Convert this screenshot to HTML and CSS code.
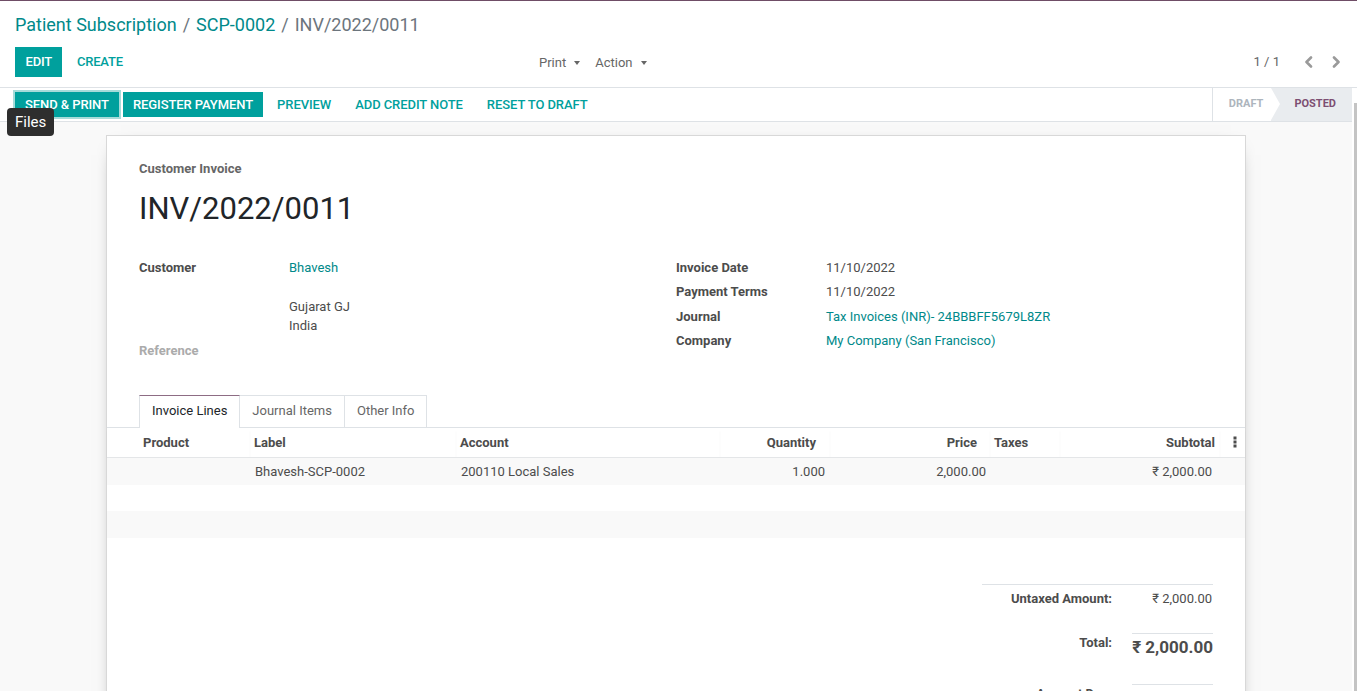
FILE: index.html
```html
<!DOCTYPE html>
<html lang="en">
<head>
<meta charset="utf-8">
<title>INV/2022/0011</title>
<link rel="stylesheet" href="styles.css">
</head>
<body>
<div class="control-panel">
  <ol class="breadcrumb">
    <li><a href="#">Patient Subscription</a></li>
    <li class="sep">/</li>
    <li><a href="#">SCP-0002</a></li>
    <li class="sep">/</li>
    <li class="active">INV/2022/0011</li>
  </ol>
  <div class="cp-bottom">
    <div class="cp-left">
      <button class="btn btn-primary cp-btn">Edit</button>
      <button class="btn btn-link cp-btn">Create</button>
      <div class="action-menus">
        <span class="dd">Print <i class="caret"></i></span>
        <span class="dd">Action <i class="caret"></i></span>
      </div>
    </div>
    <div class="cp-right">
      <span class="pager-value">1 / 1</span>
      <button class="pager-btn" aria-label="Previous">
        <svg width="9" height="12" viewBox="0 0 9 12"><polyline points="7,1.5 2.5,6 7,10.5" fill="none" stroke="#9a9a9a" stroke-width="2.6" stroke-linecap="round" stroke-linejoin="round"/></svg>
      </button>
      <button class="pager-btn" aria-label="Next">
        <svg width="9" height="12" viewBox="0 0 9 12"><polyline points="2,1.5 6.5,6 2,10.5" fill="none" stroke="#9a9a9a" stroke-width="2.6" stroke-linecap="round" stroke-linejoin="round"/></svg>
      </button>
    </div>
  </div>
</div>

<div class="form-area">
  <div class="form-main">
    <div class="statusbar">
      <div class="sb-buttons">
        <button class="btn btn-primary sb-btn focused">Send &amp; Print</button>
        <button class="btn btn-primary sb-btn">Register Payment</button>
        <button class="btn btn-link sb-btn">Preview</button>
        <button class="btn btn-link sb-btn">Add Credit Note</button>
        <button class="btn btn-link sb-btn">Reset to Draft</button>
      </div>
      <div class="sb-status">
        <span class="st st-draft">Draft</span>
        <span class="st st-posted">Posted</span>
      </div>
    </div>

    <div class="sheet-bg">
      <div class="sheet">
        <div class="oe-title">
          <span class="subtitle">Customer Invoice</span>
          <h1>INV/2022/0011</h1>
        </div>

        <div class="groups">
          <div class="group">
            <div class="lbl">Customer</div>
            <div class="val"><a href="#">Bhavesh</a><br><br>Gujarat GJ<br>India</div>
            <div class="lbl empty">Reference</div>
            <div class="val"></div>
          </div>
          <div class="group">
            <div class="lbl">Invoice Date</div>
            <div class="val">11/10/2022</div>
            <div class="lbl">Payment Terms</div>
            <div class="val">11/10/2022</div>
            <div class="lbl">Journal</div>
            <div class="val"><a href="#">Tax Invoices (INR)- 24BBBFF5679L8ZR</a></div>
            <div class="lbl">Company</div>
            <div class="val"><a href="#">My Company (San Francisco)</a></div>
          </div>
        </div>

        <div class="notebook">
          <div class="tabs">
            <span class="tab active">Invoice Lines</span>
            <span class="tab">Journal Items</span>
            <span class="tab">Other Info</span>
          </div>
          <table class="list">
            <colgroup>
              <col class="c-product"><col class="c-label"><col class="c-account"><col class="c-qty"><col class="c-price"><col class="c-taxes"><col class="c-sub"><col class="c-opt">
            </colgroup>
            <thead>
              <tr>
                <th class="first">Product</th>
                <th>Label</th>
                <th>Account</th>
                <th class="num qty">Quantity</th>
                <th class="num price">Price</th>
                <th>Taxes</th>
                <th class="num sub">Subtotal</th>
                <th class="opt">
                  <svg width="4" height="12" viewBox="0 0 4 12"><rect x="0.5" y="0.5" width="3" height="3" fill="#4c4c4c"/><rect x="0.5" y="4.5" width="3" height="3" fill="#4c4c4c"/><rect x="0.5" y="8.5" width="3" height="3" fill="#4c4c4c"/></svg>
                </th>
              </tr>
            </thead>
            <tbody>
              <tr class="odd">
                <td class="first"></td>
                <td>Bhavesh-SCP-0002</td>
                <td>200110 Local Sales</td>
                <td class="num qty">1.000</td>
                <td class="num price">2,000.00</td>
                <td></td>
                <td class="num sub">₹ 2,000.00</td>
                <td></td>
              </tr>
              <tr><td colspan="8">&nbsp;</td></tr>
              <tr class="odd"><td colspan="8">&nbsp;</td></tr>
              <tr><td colspan="8">&nbsp;</td></tr>
            </tbody>
          </table>
        </div>

        <div class="totals-wrap">
          <table class="totals">
            <tr class="untaxed">
              <td class="t-label">Untaxed Amount:</td>
              <td class="t-value">₹ 2,000.00</td>
            </tr>
            <tr class="total">
              <td class="t-label">Total:</td>
              <td class="t-value">₹ 2,000.00</td>
            </tr>
            <tr class="due">
              <td class="t-label">Amount Due:</td>
              <td class="t-value">₹ 2,000.00</td>
            </tr>
          </table>
        </div>
      </div>
    </div>
  </div>
  <div class="vscroll"><div class="thumb"></div></div>
</div>

<div class="tooltip">Files</div>
</body>
</html>
```

FILE: styles.css
```css
* { box-sizing: border-box; }

html, body { margin: 0; height: 100%; }

body {
  font-family: Roboto, "Noto Sans", "DejaVu Sans", sans-serif;
  font-size: 13px;
  line-height: 1.5;
  color: #4c4c4c;
  background: #fff;
  overflow: hidden;
  border-top: 1px solid #6f4d66;
  position: relative;
  display: flex;
  flex-direction: column;
}

a { color: #00898a; text-decoration: none; }

/* ---------- control panel ---------- */
.control-panel {
  padding: 10px 7px 11px 15px;
  border-bottom: 1px solid #dee2e6;
  flex: none;
}

.breadcrumb {
  display: flex;
  margin: 0;
  padding: 0;
  list-style: none;
  font-size: 18px;
  line-height: 27px;
}
.breadcrumb .sep { padding: 0 6px; color: #6c757d; }
.breadcrumb .active { color: #6c757d; }

.cp-bottom {
  display: grid;
  grid-template-columns: 1fr 1fr;
  margin-top: 8px;
  height: 30px;
}
.cp-left { display: flex; align-items: center; }
.cp-right { display: flex; align-items: center; justify-content: flex-end; padding-top: 1px; }

.btn {
  font-family: inherit;
  font-size: 13px;
  font-weight: 500;
  letter-spacing: -0.2px;
  text-transform: uppercase;
  border: 0;
  background: none;
  cursor: pointer;
  padding: 0 10px;
  line-height: 1;
}
.btn-primary { background: #00a09d; color: #fff; }
.btn-link { color: #00a09d; }

.cp-btn { height: 30px; padding: 0 10.5px; margin-right: 4px; }

.action-menus {
  margin-left: auto;
  padding-right: 36px;
  padding-top: 2px;
  display: flex;
  gap: 15px;
  color: #666;
}
.dd { display: flex; align-items: center; gap: 8px; }
.caret {
  display: inline-block;
  width: 0; height: 0;
  border-left: 3.5px solid transparent;
  border-right: 3.5px solid transparent;
  border-top: 4px solid #666;
}

.pager-value { color: #666; margin-right: 14px; }
.pager-btn {
  border: 0; background: none; padding: 0;
  width: 28px; height: 30px;
  display: flex; align-items: center; justify-content: center;
}

/* ---------- form area ---------- */
.form-area {
  flex: 1;
  min-height: 0;
  display: flex;
}
.form-main {
  flex: 1;
  min-width: 0;
  display: flex;
  flex-direction: column;
}
.vscroll {
  width: 5px;
  background: #fff;
  padding-top: 15px;
  display: flex;
  justify-content: flex-end;
}
.vscroll .thumb { width: 3px; height: 100%; background: #c4c4c4; }

.statusbar {
  display: flex;
  height: 34px;
  border-bottom: 1px solid #dee2e6;
  background: #fff;
  flex: none;
}
.sb-buttons {
  flex: 1;
  display: flex;
  align-items: center;
  padding-left: 15px;
  gap: 4px;
}
.sb-btn { height: 25px; padding: 0 10px; letter-spacing: -0.08px; }
.sb-btn.focused { box-shadow: 0 0 0 2px #a6dbd9; }

.sb-status {
  display: flex;
  border-left: 1px solid #dee2e6;
}
.st {
  display: flex;
  align-items: center;
  font-size: 11px;
  font-weight: 700;
  text-transform: uppercase;
}
.st-draft { padding: 0 8px 0 16px; color: #adb5bd; }
.st-posted {
  position: relative;
  background: #e9ecef;
  color: #7d4f72;
  padding: 0 16px 0 23px;
}
.st-posted::before {
  content: "";
  position: absolute;
  left: 0; top: 0;
  border-left: 9px solid #fff;
  border-top: 16.5px solid transparent;
  border-bottom: 16.5px solid transparent;
}

.sheet-bg {
  flex: 1;
  background: #f9f9f9;
  padding-top: 13px;
}
.sheet {
  width: 1140px;
  margin: 0 auto;
  background: #fff;
  border: 1px solid #d8d8d8;
  box-shadow: 0 5px 20px -15px #000;
  padding: 23px 32px 40px;
}

.subtitle { display: block; font-weight: 700; color: #666; line-height: 19.5px; }
h1 {
  margin: 11.5px 0 0;
  font-size: 31px;
  font-weight: 400;
  line-height: 37px;
  color: #212529;
}

.groups {
  display: grid;
  grid-template-columns: 1fr 1fr;
  margin-top: 28px;
}
.group {
  display: grid;
  grid-template-columns: 150px 1fr;
  align-content: start;
}
.lbl, .val { padding: 2.5px 0; line-height: 19.5px; }
.lbl { font-weight: 700; color: #4c4c4c; }
.lbl.empty { color: #ababab; }

/* notebook */
.notebook { margin: 32px -32px 0; }
.tabs {
  display: flex;
  align-items: flex-end;
  padding-left: 32px;
  border-bottom: 1px solid #dee2e6;
}
.tab {
  padding: 5.5px 12px 6.5px;
  line-height: 19.5px;
  border: 1px solid #dee2e6;
  border-bottom: 0;
  margin-right: -1px;
  color: #666;
  background: #fff;
}
.tab.active {
  color: #212529;
  border-top-color: #8d6c84;
  position: relative;
  z-index: 1;
  margin-bottom: -1px;
  padding-bottom: 7.5px;
}

.list {
  width: 100%;
  border-collapse: collapse;
  table-layout: fixed;
}
.c-product { width: 143px; }
.c-label { width: 206px; }
.c-account { width: 264px; }
.c-qty { width: 110px; }
.c-price { width: 160px; }
.c-taxes { width: 70px; }
.c-sub { width: 160px; }
.c-opt { width: 25px; }

.list th {
  text-align: left;
  font-weight: 700;
  color: #4c4c4c;
  padding: 4.5px 4px 5px;
  line-height: 19.5px;
  border-bottom: 1px solid #e4e6e8;
  box-shadow: 0 2px 3px -1px rgba(0, 0, 0, 0.06);
  white-space: nowrap;
}
.list td {
  padding: 3.5px 5px;
  line-height: 19.5px;
  white-space: nowrap;
}
.list .first { padding-left: 36px; }
.list .num { text-align: right; }
.list th.qty { padding-right: 14px; }
.list th.price { padding-right: 13px; }
.list th.sub { padding-right: 5px; }
.list td.qty { padding-right: 5px; }
.list td.price { padding-right: 4px; }
.list td.sub { padding-right: 8px; }
.list th.opt { padding: 4.5px 0 5px 13px; }
.list th.opt svg { display: block; }
.list tr.odd td { background: #f9f9f9; }

/* totals */
.totals-wrap {
  display: flex;
  justify-content: flex-end;
  margin-top: 20px;
}
.totals {
  width: 231px;
  border-collapse: collapse;
}
.totals td { vertical-align: top; white-space: nowrap; }
.t-label { text-align: right; font-weight: 700; padding-right: 20px; width: 150px; }
.t-value { text-align: right; width: 81px; }

.untaxed td {
  border-top: 1px solid #dee2e6;
  padding-top: 4px;
  padding-bottom: 24.5px;
  line-height: 19.5px;
}
.total .t-label { padding-top: 1px; line-height: 16px; }
.total .t-value {
  border-top: 1px solid #dee2e6;
  padding: 2px 0 26px;
  font-size: 17px;
  font-weight: 700;
  line-height: 22px;
}
.due .t-label { line-height: 12px; padding-top: 3px; }
.due .t-value { border-top: 1px solid #dee2e6; padding-top: 4px; line-height: 19.5px; }

/* tooltip */
.tooltip {
  position: absolute;
  left: 7px;
  top: 107px;
  height: 28px;
  line-height: 28px;
  padding: 0 8px;
  background: #2e2e2e;
  color: #fff;
  font-size: 15px;
  border-radius: 4px;
  z-index: 10;
}
```
